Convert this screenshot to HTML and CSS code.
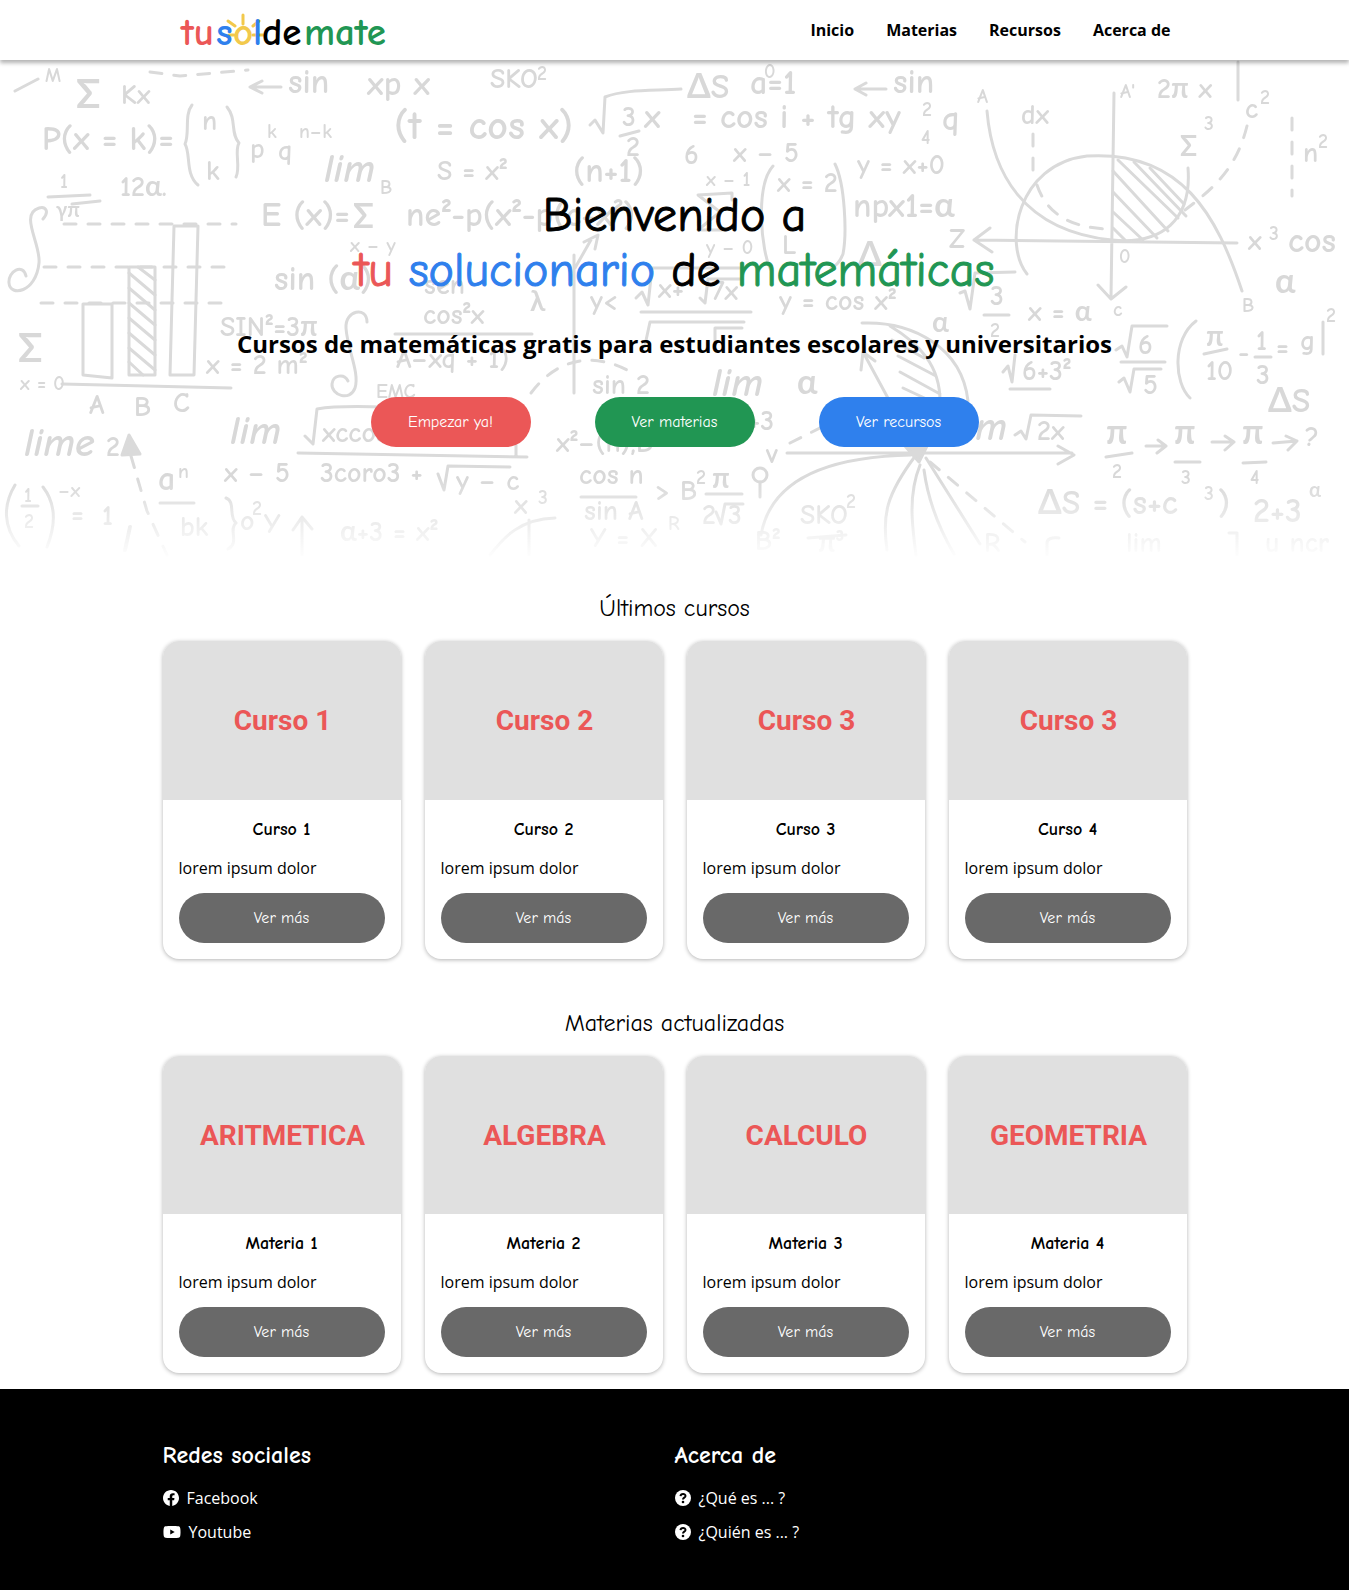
FILE: index.html
```html
<!DOCTYPE html>
<html lang="es">
<head>
<meta charset="utf-8">
<meta name="viewport" content="width=device-width, initial-scale=1">
<title>tusoldemate</title>
<link rel="stylesheet" href="styles.css">
</head>
<body>
<header class="header">
  <div class="container header-inner">
    <a class="logo" href="#" aria-label="tusoldemate">
      <svg width="212" height="60" viewBox="0 0 212 60">
        <g stroke="#f2c94c" stroke-width="3" stroke-linecap="round">
          <path d="M64 15v9M49 21l7 5M80 21l-6 5M50 35h5M74 35h10"/>
        </g>
        <g class="logo-text">
          <text x="2" y="45" fill="#eb5757">tu</text>
          <text x="37" y="45" fill="#2f80ed">s</text>
          <text x="54" y="45" fill="#f2c94c">o</text>
          <text x="74" y="45" fill="#2f80ed">l</text>
          <text x="83" y="45" fill="#000">de</text>
          <text x="125" y="45" fill="#219653">mate</text>
        </g>
      </svg>
    </a>
    <nav class="nav">
      <a href="#">Inicio</a>
      <a href="#">Materias</a>
      <a href="#">Recursos</a>
      <a href="#">Acerca de</a>
    </nav>
  </div>
</header>

<section class="hero">
  <svg class="hero-bg" viewBox="0 60 1349 500" preserveAspectRatio="xMidYMid slice" aria-hidden="true">
    <g class="lines">
      <path d="M15 91l23-12M250 87h31M262 81l-12 6 12 6"/>
      <path class="dash" d="M150 72l30 4 68-6"/>
      <path d="M192 105c-8 10-2 28-7 39 6 10 0 30 13 41M227 107c10 12 3 26 12 36-5 8 2 24-3 34"/>
      <path d="M48 197l42-2M72 204l28-3"/>
      <path d="M43 219c7-8 2-13-4-11-20 6 2 36 0 55-3 30-29 34-30 20-1-12 14-20 17-7"/>
      <path class="dash" d="M64 224h172M44 267h184M41 303h190"/>
      <path d="M83 375v-71h29v74zM129 375v-108h26v108zM170 375l4-149h24l-4 149zM62 384l169 4"/>
      <path d="M129 273l26 22M129 288l26 22M129 303l26 22M129 318l26 22M129 333l26 22M129 348l26 22M138 267l17 13M129 362l14 13"/>
      <path class="solid" d="M129 435l-7 20 18-1z"/>
      <path class="dash" d="M131 456l16 55 20 44"/>
      <path d="M15 485c-12 20-12 42 4 61M43 487c14 18 12 40 4 60M22 506h16M160 503h34"/>
      <path d="M226 498c10 4 2 18 10 25-8 6 4 20-8 26M302 555v-38M293 530l9-13 10 12"/>
      <path d="M367 322c0-16-22-12-21 6 1 20 14 45 9 60-5 14-24 7-23-4 1-9 12-11 16-3"/>
      <path d="M305 436l8 8 4-35c24-4 48-2 72-2M298 453l229 4M516 457v-12M438 474l6 16 4-24 62 1M395 334h137"/>
      <path class="dash" d="M531 393c30-40 70-40 105-18"/>
      <path d="M574 255v138M490 555c14-18 30-36 65-37M529 520v35M584 242l14-7-3 14M592 238l-17 30"/>
      <path d="M590 125l5-5 8 13 2-36c20-8 50-6 76-8M620 136l19-5M732 200v-7l-34 2 22 17-22 18h28"/>
      <path d="M773 166c-18 20-12 86-2 104M835 164c10 20 12 70 8 90-4 10-8 12-12 14M855 89h31M866 83l-11 6 11 6"/>
      <path d="M636 298l6-6 6 13 4-37h88M700 298l5 5 3-24h34M641 312h110M645 345l5-23h94M715 345v-17h27"/>
      <path d="M581 497h55M706 494h36M716 512l5 12 4-20h18M808 538l38-3"/>
      <circle cx="760" cy="475" r="7"/>
      <path d="M760 482v15"/>
      <path d="M787 453h285M1058 446l16 9-16 9M761 535c8-46 50-78 150-80M916 455c-30 40-34 60-29 95M920 465c-12 30-8 60-4 90M924 470c4 30 16 60 30 84M926 458l54 86"/>
      <path class="dash" d="M930 462l95 80M790 443l34-17"/>
      <path class="solid" d="M905 446h22l-8 16z"/>
      <path d="M862 323c50-2 100 24 106 78M890 326c30 18 50 40 50 75M863 352l26 48M861 370l2-18 12 9M892 340l32 18M898 356l38 20M900 372l40 22M903 388l30 14"/>
      <!-- Parabolas and axes -->
      <path d="M987 111c5 60 35 120 125 129 50 5 80-20 76-72M1027 274c-24-30-10-110 60-118 95-6 130 60 155 135"/>
      <path d="M1114 93l-3 205M1098 285l13 14 15-12M990 228l-16 12 18 12M974 240l263 3M1238 62v38"/>
      <path d="M1113 171l55 60M1113 192l44 46M1113 212l30 28M1118 160l60 58M1134 162l52 54M1150 168l34 36M1113 228l12 12"/>
      <path class="dash" d="M1033 134v42M1037 185c10 30 35 42 68 44M1247 126c-10 40-30 60-62 84M1292 118v78"/>
      <path d="M960 293l5-2 5 18 5-36 40-1M984 315h25M1003 372l5-6 4 16 3-27M1010 389h40"/>
      <path d="M1116 350l6-4 5 11 5-31h35M1121 362h44M1119 382l5-4 6 14 4-23h27M1196 321c-24 18-22 62-6 77M1204 354l23-5M1255 357h16M1323 322v32"/>
      <path d="M1015 435l6-4 5 8 5-24 50 1M1106 457l26-4M1175 462h25M1243 463l23-1M1146 446h20M1158 440l8 6-9 7M1212 442h22M1225 436l9 6-9 8M1273 443l24-2M1286 436l11 5-9 9"/>
      <path d="M1047 555v-12q0-6 12-5M1229 533h8v22"/>
    </g>
    <g class="f s20">
      <text x="45" y="82">M</text><text x="380" y="194">B</text><text x="299" y="138">n–k</text>
      <text x="267" y="138">k</text><text x="350" y="252">x – y</text><text x="376" y="398">EMC</text>
      <text x="706" y="186">x – 1</text><text x="706" y="254">y – 0</text><text x="20" y="390">x = 0</text>
      <text x="977" y="103">A</text><text x="1120" y="98">A'</text><text x="178" y="478">n</text>
      <text x="537" y="80">2</text><text x="764" y="78">0</text><text x="922" y="116">2</text><text x="921" y="144">4</text>
      <text x="1204" y="130">3</text><text x="1260" y="104">2</text><text x="1318" y="148">2</text>
      <text x="1269" y="240">3</text><text x="1119" y="263">0</text><text x="1242" y="312">B</text>
      <text x="58" y="497">–x</text><text x="252" y="515">2</text><text x="538" y="504">3</text><text x="696" y="484">2</text>
      <text x="846" y="508">2</text><text x="1204" y="500">3</text><text x="1309" y="497">α</text><text x="1326" y="322">2</text>
      <text x="56" y="217">γπ</text><text x="60" y="188">1</text><text x="24" y="502">1</text><text x="24" y="528">2</text>
      <text x="1113" y="316">c</text><text x="668" y="530">R</text>
      <text x="1112" y="478">2</text><text x="1181" y="484">3</text><text x="1250" y="484">4</text><text x="990" y="337">2</text>
    </g>
    <g class="f s28">
      <text x="121" y="104">Kx</text><text x="202" y="130">n</text><text x="206" y="180">k</text>
      <text x="120" y="196">12α.</text><text x="490" y="88">SKO</text><text x="250" y="158">p</text><text x="278" y="160">q</text>
      <text x="437" y="180">S = x²</text><text x="684" y="164">6</text><text x="733" y="162">x – 5</text>
      <text x="857" y="174">y = x+0</text><text x="777" y="192">x = 2</text><text x="782" y="254">L</text>
      <text x="1157" y="98">2π x</text><text x="1021" y="124">dx</text><text x="1245" y="118">c</text>
      <text x="1180" y="156">Σ</text><text x="1303" y="162">n</text><text x="949" y="248">Z</text><text x="1248" y="250">x</text>
      <text x="220" y="336">SIN²=3π</text><text x="206" y="374">x = 2 m²</text><text x="423" y="324">cos²x</text>
      <text x="396" y="368">A–xq + 1)</text><text x="592" y="394">sin 2</text><text x="89" y="414">A</text><text x="134" y="416">B</text><text x="173" y="412">C</text>
      <text x="622" y="126">3</text><text x="626" y="156">2</text><text x="424" y="294">sen</text>
      <text x="224" y="482">x – 5</text><text x="320" y="482">3coro3 +</text><text x="456" y="490">y – c</text>
      <text x="322" y="442">xccos</text><text x="514" y="514">x</text><text x="579" y="484">cos n</text><text x="584" y="520">sin A</text>
      <text x="680" y="500">B</text><text x="712" y="488">π</text><text x="702" y="524">2</text><text x="728" y="524">3</text><text x="655" y="500">&gt;</text>
      <text x="800" y="524">SKO</text><text x="590" y="547">Y = X</text><text x="340" y="541">α+3 = x²</text>
      <text x="180" y="536">bk</text><text x="240" y="530">o</text><text x="264" y="533">Y</text><text x="102" y="525">1</text><text x="71" y="523">=</text>
      <text x="766" y="463">v</text><text x="748" y="430">+3</text><text x="990" y="305">3</text><text x="1028" y="321">x = α</text>
      <text x="932" y="332">α</text><text x="1022" y="380">6+3²</text><text x="1138" y="354">6</text><text x="1143" y="394">5</text>
      <text x="1206" y="346">π</text><text x="1206" y="380">10</text><text x="1238" y="362">-</text><text x="1256" y="350">1</text><text x="1256" y="384">3</text><text x="1276" y="356">=</text><text x="1300" y="350">g</text>
      <text x="1037" y="440">2x</text><text x="1305" y="446">?</text><text x="779" y="310">y = cos x²</text>
      <text x="658" y="298">x+</text><text x="712" y="300">7x</text><text x="590" y="310">y&lt;</text><text x="530" y="311">λ</text>
      <text x="755" y="550">B²</text><text x="818" y="552">π³</text><text x="1126" y="552">lim</text><text x="1265" y="552">u ncr</text>
      <text x="556" y="452">x²–(n),B</text><text x="984" y="552">R</text>
    </g>
    <g class="f s34">
      <text x="42" y="150">P(x = k)=</text><text x="288" y="93">sin</text><text x="367" y="95">xp x</text>
      <text x="261" y="226">E (x)=</text><text x="353" y="228">Σ</text><text x="406" y="226">ne²-p(x²-p(c+x²)</text>
      <text x="687" y="98">ΔS</text><text x="750" y="94">a=1</text><text x="893" y="93">sin</text>
      <text x="644" y="128">x</text><text x="692" y="128">= cos i + tg xy</text><text x="942" y="130">q</text>
      <text x="573" y="182">(n+1)</text><text x="853" y="217">npx1=α</text><text x="274" y="290">sin (α)</text>
      <text x="1288" y="252">cos</text><text x="1275" y="293">α</text><text x="797" y="394">α</text>
      <text x="858" y="266">Δ</text><text x="1268" y="412">ΔS</text><text x="158" y="490">a</text>
      <text x="1106" y="444">π</text><text x="1174" y="444">π</text><text x="1242" y="444">π</text>
      <text x="1038" y="514">ΔS = (s+c</text><text x="1218" y="514">)</text><text x="1253" y="522">2+3</text>
    </g>
    <g class="f s40">
      <text x="394" y="139">(t = cos x)</text><text x="76" y="108">Σ</text><text x="18" y="362">Σ</text>
    </g>
    <g class="f s40 script">
      <text x="324" y="182">lim</text><text x="24" y="456">lime</text><text x="230" y="444">lim</text>
      <text x="712" y="396">lim</text><text x="956" y="440">lim</text><text x="122" y="552">l</text>
    </g>
    <g class="f s28"><text x="106" y="456">2</text></g>
  </svg>
  <div class="container hero-inner">
    <h1 class="hero-title">Bienvenido a<br><span class="red">tu</span> <span class="blue">solucionario</span> de <span class="green">matemáticas</span></h1>
    <p class="hero-lead">Cursos de matemáticas gratis para estudiantes escolares y universitarios</p>
    <div class="hero-actions">
      <button class="btn btn-red" type="button">Empezar ya!</button>
      <button class="btn btn-green" type="button">Ver materias</button>
      <button class="btn btn-blue" type="button">Ver recursos</button>
    </div>
  </div>
</section>

<main>
  <section class="section container">
    <h2 class="section-title">Últimos cursos</h2>
    <div class="cards">
      <article class="card"><div class="card-img">Curso 1</div><div class="card-body"><h3 class="card-title">Curso 1</h3><p class="card-text">lorem ipsum dolor</p><button class="btn btn-gray" type="button">Ver más</button></div></article>
      <article class="card"><div class="card-img">Curso 2</div><div class="card-body"><h3 class="card-title">Curso 2</h3><p class="card-text">lorem ipsum dolor</p><button class="btn btn-gray" type="button">Ver más</button></div></article>
      <article class="card"><div class="card-img">Curso 3</div><div class="card-body"><h3 class="card-title">Curso 3</h3><p class="card-text">lorem ipsum dolor</p><button class="btn btn-gray" type="button">Ver más</button></div></article>
      <article class="card"><div class="card-img">Curso 3</div><div class="card-body"><h3 class="card-title">Curso 4</h3><p class="card-text">lorem ipsum dolor</p><button class="btn btn-gray" type="button">Ver más</button></div></article>
    </div>
  </section>
  <section class="section container">
    <h2 class="section-title">Materias actualizadas</h2>
    <div class="cards">
      <article class="card"><div class="card-img">ARITMETICA</div><div class="card-body"><h3 class="card-title">Materia 1</h3><p class="card-text">lorem ipsum dolor</p><button class="btn btn-gray" type="button">Ver más</button></div></article>
      <article class="card"><div class="card-img">ALGEBRA</div><div class="card-body"><h3 class="card-title">Materia 2</h3><p class="card-text">lorem ipsum dolor</p><button class="btn btn-gray" type="button">Ver más</button></div></article>
      <article class="card"><div class="card-img">CALCULO</div><div class="card-body"><h3 class="card-title">Materia 3</h3><p class="card-text">lorem ipsum dolor</p><button class="btn btn-gray" type="button">Ver más</button></div></article>
      <article class="card"><div class="card-img">GEOMETRIA</div><div class="card-body"><h3 class="card-title">Materia 4</h3><p class="card-text">lorem ipsum dolor</p><button class="btn btn-gray" type="button">Ver más</button></div></article>
    </div>
  </section>
</main>

<footer class="footer">
  <div class="container footer-inner">
    <div class="footer-col">
      <h2 class="footer-title">Redes sociales</h2>
      <a class="footer-link" href="#"><svg width="16" height="16" viewBox="8 8 496 496"><path fill="#fff" d="M504 256C504 119 393 8 256 8S8 119 8 256c0 123.800 90.700 226.400 209.300 245V327.700h-63V256h63v-54.600c0-62.200 37-96.500 93.700-96.500 27.100 0 55.500 4.800 55.500 4.800v61h-31.300c-30.800 0-40.400 19.100-40.400 38.700V256h68.800l-11 71.700h-57.800V501C413.300 482.400 504 379.800 504 256z"/></svg>Facebook</a>
      <a class="footer-link" href="#"><svg width="18" height="16" viewBox="0 0 576 512"><path fill="#fff" d="M549.700 124.100c-6.300-23.700-24.800-42.300-48.300-48.600C458.800 64 288 64 288 64S117.200 64 74.600 75.500c-23.500 6.300-42 24.900-48.300 48.600-11.400 42.900-11.400 132.300-11.400 132.300s0 89.400 11.400 132.300c6.300 23.700 24.800 41.500 48.300 47.800C117.200 448 288 448 288 448s170.800 0 213.400-11.500c23.500-6.300 42-24.200 48.300-47.800 11.400-42.900 11.400-132.300 11.400-132.300s0-89.400-11.400-132.300zM232.200 337.600V175.200l142.700 81.200-142.700 81.200z"/></svg>Youtube</a>
    </div>
    <div class="footer-col">
      <h2 class="footer-title">Acerca de</h2>
      <a class="footer-link" href="#"><svg width="16" height="16" viewBox="0 0 16 16"><circle cx="8" cy="8" r="8" fill="#fff"/><path d="M5.500 6.200C5.800 3.300 10.500 3.400 10.500 6c0 1.700-2.500 1.700-2.500 3.400" fill="none" stroke="#000" stroke-width="2"/><circle cx="8" cy="12" r="1.300"/></svg>¿Qué es ... ?</a>
      <a class="footer-link" href="#"><svg width="16" height="16" viewBox="0 0 16 16"><circle cx="8" cy="8" r="8" fill="#fff"/><path d="M5.500 6.200C5.800 3.300 10.500 3.400 10.500 6c0 1.700-2.500 1.700-2.500 3.400" fill="none" stroke="#000" stroke-width="2"/><circle cx="8" cy="12" r="1.300"/></svg>¿Quién es ... ?</a>
    </div>
  </div>
</footer>
</body>
</html>
```
FILE: styles.css
```css
:root {
  --red: #eb5757;
  --blue: #2f80ed;
  --green: #219653;
  --hand: "Comic Neue", "Lato", sans-serif;
}
* { box-sizing: border-box; }
body {
  margin: 0;
  background: #fff;
  color: #000;
  font: 16px/24px "Open Sans", sans-serif;
}
h1, h2, h3, p { margin: 0; }
a { color: inherit; text-decoration: none; }
.container {
  width: 100%;
  max-width: 1024px;
  margin: 0 auto;
}
.red { color: var(--red); }
.blue { color: var(--blue); }
.green { color: var(--green); }

.header {
  position: relative;
  z-index: 1;
  background: #fff;
  box-shadow: 0 3px 4px rgba(0, 0, 0, 0.3);
}
.header-inner {
  display: flex;
  align-items: center;
  justify-content: space-between;
  min-height: 60px;
  padding: 0 16px;
}
.logo, .logo svg { display: block; }
.logo-text { font: 700 39px var(--hand); }
.nav {
  display: flex;
  gap: 32px;
  font-weight: 700;
}

.hero {
  position: relative;
  min-height: 500px;
  overflow: hidden;
}
.hero-bg {
  position: absolute;
  inset: 0;
  width: 100%;
  height: 100%;
  -webkit-mask-image: linear-gradient(#000 84%, transparent 100%);
  mask-image: linear-gradient(#000 84%, transparent 100%);
}
.lines {
  fill: none;
  stroke: #dadada;
  stroke-width: 3;
  stroke-linecap: round;
  stroke-linejoin: round;
}
.lines .dash { stroke-dasharray: 12 12; }
.lines .solid { fill: #dadada; }
.f {
  fill: #d8d8d8;
  font-family: "Comic Neue", "Lato", "Open Sans", sans-serif;
  font-weight: 700;
}
.s20 { font-size: 20px; }
.s28 { font-size: 28px; }
.s34 { font-size: 34px; }
.s40 { font-size: 40px; }
.script { font-style: italic; }
.hero-inner {
  position: relative;
  display: flex;
  flex-direction: column;
  align-items: center;
  padding: 128px 16px 48px;
  text-align: center;
}
.hero-title {
  font: 400 48px/55px var(--hand);
  -webkit-text-stroke: 1px currentColor;
}
.hero-lead {
  margin-top: 28px;
  font-size: 24px;
  line-height: 36px;
  font-weight: 700;
}
.hero-actions {
  display: flex;
  flex-wrap: wrap;
  justify-content: center;
  gap: 16px 64px;
  margin-top: 35px;
}
.btn {
  min-width: 160px;
  height: 50px;
  padding: 0 16px;
  border: 0;
  border-radius: 25px;
  color: #fff;
  font: 400 16px/24px var(--hand);
  cursor: pointer;
}
.btn-red { background: var(--red); }
.btn-green { background: var(--green); }
.btn-blue { background: var(--blue); }
.btn-gray { background: #696969; }

.section { padding: 32px 0 16px; }
.section-title {
  margin-bottom: 16px;
  font: 400 24px/33px var(--hand);
  text-align: center;
}
.cards {
  display: grid;
  grid-template-columns: repeat(4, 1fr);
  gap: 24px;
}
.card {
  overflow: hidden;
  border-radius: 16px;
  background: #fff;
  box-shadow: 0 1px 4px rgba(0, 0, 0, 0.3);
}
.card-img {
  display: flex;
  align-items: center;
  justify-content: center;
  aspect-ratio: 3 / 2;
  padding: 2px 0 0 2px;
  background: #e0e0e0;
  color: var(--red);
  font: 700 28px/32px "Roboto", sans-serif;
}
.card-body {
  display: flex;
  flex-direction: column;
  gap: 13px;
  padding: 16px;
}
.card-title {
  font: 700 18px/27px var(--hand);
  text-align: center;
}

.footer {
  padding: 49px 0 46px;
  background: #000;
  color: #fff;
}
.footer-inner {
  display: grid;
  grid-template-columns: 1fr 1fr;
}
.footer-col {
  display: flex;
  flex-direction: column;
  align-items: flex-start;
  gap: 10px;
}
.footer-title {
  margin-bottom: 4px;
  font: 700 24px/34px var(--hand);
}
.footer-link {
  display: flex;
  align-items: center;
  gap: 8px;
}
```
